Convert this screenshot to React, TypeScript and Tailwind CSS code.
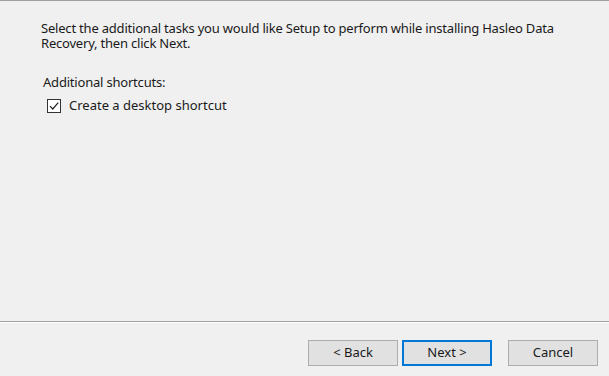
export default function App() {
  const font = { fontFamily: '"Noto Sans", "Open Sans", sans-serif' };
  return (
    <div className="w-[609px] h-[376px] bg-[#f0f0f0] flex flex-col border-t border-[#a0a0a0] text-[13px] text-[#1a1a1a]" style={font}>
      <div className="flex-1 flex flex-col pl-[41px] pr-[30px] pt-[20px]">
        <p className="leading-[15px] tracking-[-0.2px]">
          Select the additional tasks you would like Setup to perform while installing Hasleo Data Recovery, then click Next.
        </p>
        <p className="mt-[24px] ml-[2px] leading-[15px] tracking-[-0.2px]">Additional shortcuts:</p>
        <label className="mt-[8px] ml-[6px] flex items-center gap-[8px] leading-[15px]">
          <span className="w-[14px] h-[14px] border border-[#333] bg-white flex items-center justify-center">
            <svg width="12" height="12" viewBox="0 0 12 12">
              <path d="M2 6.2 L4.8 9 L10.2 2.6" fill="none" stroke="#222" strokeWidth="1.2" />
            </svg>
          </span>
          <span>Create a desktop shortcut</span>
        </label>
      </div>
      <div className="h-[2px] border-t border-[#a0a0a0] bg-white shrink-0 mb-[17px]" />
      <div className="flex justify-end pr-[11px] pb-[10px] h-[36px] shrink-0">
        <div className="flex items-start">
          <button className="w-[90px] h-[26px] bg-[#e1e1e1] border border-[#adadad] text-[13px]">&lt; Back</button>
          <button className="ml-[4px] w-[90px] h-[26px] bg-[#e1e1e1] border-2 border-[#0078d7] text-[13px]">Next &gt;</button>
          <button className="ml-[16px] w-[90px] h-[26px] bg-[#e1e1e1] border border-[#adadad] text-[13px]">Cancel</button>
        </div>
      </div>
    </div>
  );
}
